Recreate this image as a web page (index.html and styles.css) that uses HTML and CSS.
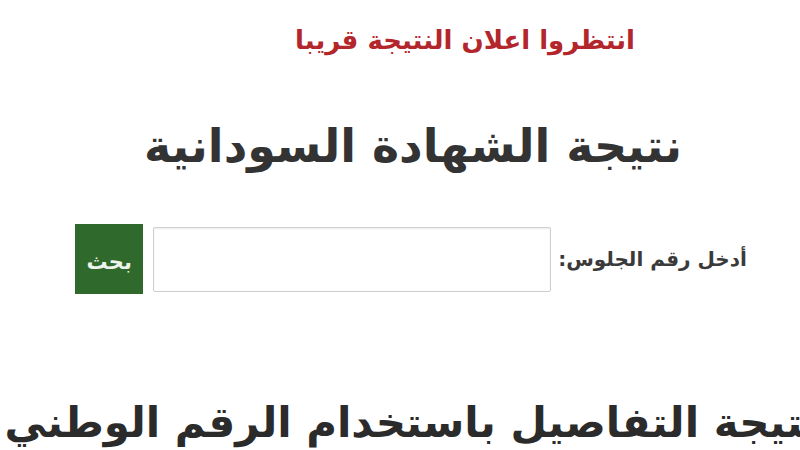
FILE: index.html
```html
<!DOCTYPE html>
<html lang="ar" dir="rtl">
<head>
<meta charset="utf-8">
<title>نتيجة الشهادة السودانية</title>
<link rel="stylesheet" href="styles.css">
</head>
<body>
<main class="page">
  <p class="notice">انتظروا اعلان النتيجة قريبا</p>
  <h1 class="title">نتيجة الشهادة السودانية</h1>
  <form class="search">
    <label class="search-label" for="seat">أدخل رقم الجلوس:</label>
    <input class="search-input" id="seat" type="text">
    <button class="search-btn" type="button">بحث</button>
  </form>
  <h2 class="subtitle">نتيجة التفاصيل باستخدام الرقم الوطني</h2>
</main>
</body>
</html>
```
FILE: styles.css
```css
html, body {
  margin: 0;
  padding: 0;
  background: #ffffff;
  overflow: hidden;
}

.page {
  width: 800px;
  height: 450px;
  display: flex;
  flex-direction: column;
  align-items: center;
  font-family: "DejaVu Sans", sans-serif;
  overflow: hidden;
}

.notice {
  margin: 16px 0 0 130px;
  font-size: 26px;
  font-weight: bold;
  color: #b3262b;
  line-height: 48px;
}

.title {
  margin: 52px 0 0 26px;
  font-size: 46px;
  font-weight: bold;
  color: #333333;
  line-height: 60px;
}

.search {
  margin: 48px 0 0 22px;
  display: flex;
  align-items: center;
}

.search-label {
  font-size: 20px;
  font-weight: bold;
  color: #3a3a3a;
  margin-left: 7px;
}

.search-input {
  width: 398px;
  height: 65px;
  box-sizing: border-box;
  border: 1px solid #cfcfcf;
  border-radius: 2px;
  background: #fff;
  box-shadow: inset 0 1px 2px rgba(0,0,0,0.08);
  margin-left: 10px;
}

.search-btn {
  width: 68px;
  height: 70px;
  border: none;
  background: #2f6a2c;
  color: #eef3ec;
  font-family: "DejaVu Sans", sans-serif;
  font-size: 21px;
  font-weight: bold;
  padding: 6px 0 0;
}

.subtitle {
  margin: 94px 0 0 24px;
  font-size: 42px;
  font-weight: bold;
  color: #2b2b2b;
  white-space: nowrap;
  line-height: 70px;
}
```
